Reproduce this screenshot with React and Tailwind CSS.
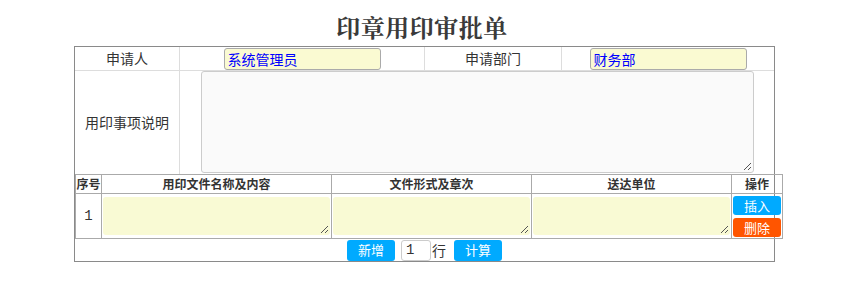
export default function App() {
  const cjk = { fontFamily: '"Microsoft YaHei", "Noto Sans CJK SC", "Liberation Sans", sans-serif' };

  return (
    <div className="w-[844px] h-[301px] bg-white text-[#333]" style={cjk}>
      {/* TITLE */}
      <div className="h-[46px] flex items-end justify-center pb-[5px]">
        <h1
          className="text-[24px] leading-[28px] font-bold text-[#3a3a3a] tracking-[0.5px]"
          style={{ fontFamily: '"Noto Serif CJK SC", "Noto Sans CJK SC", serif' }}
        >
          印章用印审批单
        </h1>
      </div>

      {/* FORM */}
      <div className="ml-[74px] w-[701px] border border-[#8a8a8a]">
        {/* row 1 */}
        <div className="grid grid-cols-[105px_245px_137px_1fr] h-[24px] border-b border-[#ddd]">
          <div className="border-r border-[#ddd] flex items-center justify-center text-[14px]">申请人</div>
          <div className="border-r border-[#ddd] flex items-center justify-center">
            <div className="w-[157px] h-[22px] mt-[1px] bg-[#fafad2] border border-[#aaa] rounded-[3px] text-[14px] leading-[20px] text-[#0000ff] px-[3px]">
              系统管理员
            </div>
          </div>
          <div className="border-r border-[#ddd] flex items-center justify-center text-[14px]">申请部门</div>
          <div className="flex items-center justify-center">
            <div className="w-[157px] h-[22px] mt-[1px] bg-[#fafad2] border border-[#aaa] rounded-[3px] text-[14px] leading-[20px] text-[#0000ff] px-[3px]">
              财务部
            </div>
          </div>
        </div>

        {/* row 2 */}
        <div className="grid grid-cols-[105px_1fr] h-[103px]">
          <div className="border-r border-[#ddd] flex items-center justify-center text-[14px] pb-[1px]">用印事项说明</div>
          <div className="flex justify-center">
            <div className="relative w-[553px] h-[102px] bg-[#fafafa] border border-[#ccc] rounded-[3px]">
              <Grip />
            </div>
          </div>
        </div>

        {/* detail table */}
        <div className="w-[708px] border-l border-t border-[#aaa]">
          <div className="grid grid-cols-[26px_230px_200px_200px_51px] h-[19px] text-[12px] font-bold text-[#333]">
            {["序号", "用印文件名称及内容", "文件形式及章次", "送达单位", "操作"].map((t) => (
              <div key={t} className="border-r border-b border-[#aaa] flex items-center justify-center leading-none">
                {t}
              </div>
            ))}
          </div>
          <div className="grid grid-cols-[26px_230px_200px_200px_51px] h-[45px]">
            <div
              className="border-r border-b border-[#aaa] flex items-center justify-center text-[14px]"
              style={{ fontFamily: '"Liberation Mono", monospace' }}
            >
              1
            </div>
            {[0, 1, 2].map((i) => (
              <div key={i} className="border-r border-b border-[#aaa] pt-[3px] pl-[1px] pr-[1px]">
                <div className="relative h-[38px] bg-[#f9fad4] rounded-[3px]">
                  <Grip />
                </div>
              </div>
            ))}
            <div className="border-r border-b border-[#aaa] flex flex-col items-center pt-[2px] gap-[3px]">
              <button className="w-[48px] h-[19px] rounded-[3px] bg-[#00aaff] text-white text-[13px] leading-[19px]">插入</button>
              <button className="w-[48px] h-[19px] rounded-[3px] bg-[#ff5500] text-white text-[13px] leading-[19px]">删除</button>
            </div>
          </div>
        </div>

        {/* footer */}
        <div className="h-[22px] flex items-center justify-center">
          <button className="w-[48px] h-[21px] rounded-[3px] bg-[#00aaff] text-white text-[13px]">新增</button>
          <div
            className="ml-[6px] w-[30px] h-[21px] border border-[#ccc] rounded-[3px] bg-white text-[14px] leading-[19px] px-[4px]"
            style={{ fontFamily: '"Liberation Mono", monospace' }}
          >
            1
          </div>
          <span className="ml-[1px] text-[14px]">行</span>
          <button className="ml-[8px] w-[48px] h-[21px] rounded-[3px] bg-[#00aaff] text-white text-[13px]">计算</button>
        </div>
      </div>
    </div>
  );
}

function Grip() {
  return (
    <svg className="absolute right-[1px] bottom-[1px]" width="9" height="9" viewBox="0 0 9 9">
      <path d="M8 1 L1 8 M8 5 L5 8" stroke="#555" strokeWidth="1" />
    </svg>
  );
}
